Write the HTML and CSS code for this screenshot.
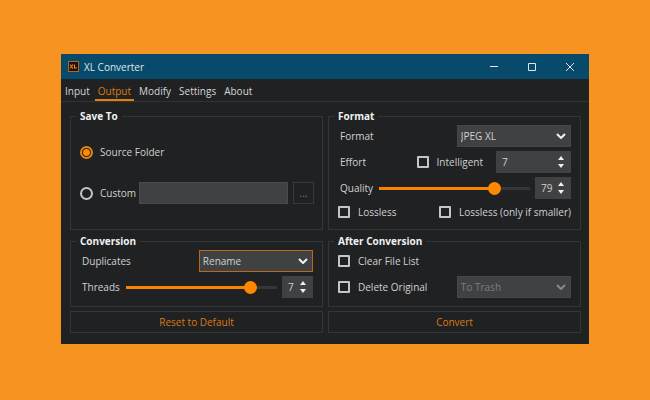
FILE: index.html
```html
<!DOCTYPE html>
<html lang="en">
<head>
<meta charset="utf-8">
<title>XL Converter</title>
<link rel="stylesheet" href="styles.css">
</head>
<body>
<main class="window">
  <header class="titlebar">
    <svg class="app-icon" viewBox="0 0 11 11" aria-hidden="true">
      <rect x="0.5" y="0.5" width="10" height="10" fill="#1c1210" stroke="#b5651d"/>
      <path d="M2 3.5l3 4M5 3.5l-3 4M6.500 3.500v3.500h2.500" fill="none" stroke="#f08a24" stroke-width="1.100"/>
    </svg>
    <h1 class="title">XL Converter</h1>
    <div class="window-controls">
      <button class="window-button" aria-label="Minimize"><svg viewBox="0 0 10 10"><path d="M1 4.500h8"/></svg></button>
      <button class="window-button" aria-label="Maximize"><svg viewBox="0 0 10 10"><path d="M1.500 1.500h7v7h-7z"/></svg></button>
      <button class="window-button" aria-label="Close"><svg viewBox="0 0 10 10"><path d="M1 1l8 8M9 1l-8 8"/></svg></button>
    </div>
  </header>
  <nav class="tabs">
    <a class="tab" href="#input">Input</a>
    <a class="tab tab-active" href="#output" aria-current="page">Output</a>
    <a class="tab" href="#modify">Modify</a>
    <a class="tab" href="#settings">Settings</a>
    <a class="tab" href="#about">About</a>
  </nav>
  <form class="panel">
    <fieldset class="group save-group">
      <legend>Save To</legend>
      <div class="row">
        <input class="radio" type="radio" name="target" id="source" checked>
        <label for="source">Source Folder</label>
      </div>
      <div class="row">
        <input class="radio" type="radio" name="target" id="custom">
        <label for="custom">Custom</label>
        <input class="path" type="text" aria-label="Custom folder" disabled>
        <button class="browse" type="button" aria-label="Browse" disabled>...</button>
      </div>
    </fieldset>

    <fieldset class="group">
      <legend>Format</legend>
      <div class="row">
        <label class="field-label" for="format">Format</label>
        <div class="select push">
          <select id="format"><option>JPEG XL</option></select>
          <svg class="chevron" viewBox="0 0 10 6" aria-hidden="true"><path d="M1 1l4 4 4-4"/></svg>
        </div>
      </div>
      <div class="row">
        <label class="field-label" for="effort">Effort</label>
        <input class="check push" type="checkbox" id="intelligent">
        <label for="intelligent">Intelligent</label>
        <div class="spin spin-wide">
          <input type="number" id="effort" value="7">
          <svg class="arrows" viewBox="0 0 6 12" aria-hidden="true"><path d="M0 4l3-4 3 4zM0 8l3 4 3-4z"/></svg>
        </div>
      </div>
      <div class="row">
        <label class="field-label" for="quality">Quality</label>
        <input class="slider" style="--fill: 78%" type="range" id="quality" min="0" max="100" value="79">
        <div class="spin">
          <input type="number" aria-label="Quality value" value="79">
          <svg class="arrows" viewBox="0 0 6 12" aria-hidden="true"><path d="M0 4l3-4 3 4zM0 8l3 4 3-4z"/></svg>
        </div>
      </div>
      <div class="row row-checks">
        <input class="check" type="checkbox" id="lossless">
        <label for="lossless">Lossless</label>
        <input class="check push" type="checkbox" id="smaller">
        <label for="smaller">Lossless (only if smaller)</label>
      </div>
    </fieldset>

    <fieldset class="group">
      <legend>Conversion</legend>
      <div class="row">
        <label class="field-label" for="duplicates">Duplicates</label>
        <div class="select select-focus push">
          <select id="duplicates"><option>Rename</option></select>
          <svg class="chevron" viewBox="0 0 10 6" aria-hidden="true"><path d="M1 1l4 4 4-4"/></svg>
        </div>
      </div>
      <div class="row">
        <label class="field-label" for="threads">Threads</label>
        <input class="slider" style="--fill: 83%" type="range" id="threads" min="1" max="8" value="7">
        <div class="spin spin-narrow">
          <input type="number" aria-label="Threads value" value="7">
          <svg class="arrows" viewBox="0 0 6 12" aria-hidden="true"><path d="M0 4l3-4 3 4zM0 8l3 4 3-4z"/></svg>
        </div>
      </div>
    </fieldset>

    <fieldset class="group">
      <legend>After Conversion</legend>
      <div class="row">
        <input class="check" type="checkbox" id="clear">
        <label for="clear">Clear File List</label>
      </div>
      <div class="row">
        <input class="check" type="checkbox" id="delete">
        <label for="delete">Delete Original</label>
        <div class="select select-disabled push">
          <select aria-label="Delete method" disabled><option>To Trash</option></select>
          <svg class="chevron" viewBox="0 0 10 6" aria-hidden="true"><path d="M1 1l4 4 4-4"/></svg>
        </div>
      </div>
    </fieldset>

    <button class="action" type="reset">Reset to Default</button>
    <button class="action" type="button">Convert</button>
  </form>
</main>
</body>
</html>
```
FILE: styles.css
```css
* {
  box-sizing: border-box;
}

body {
  margin: 0;
  padding: 54px 61px;
  min-height: 100vh;
  background: #f79321;
  color: #d0d1d2;
  font: 10px/14px "Open Sans", "Noto Sans", sans-serif;
}

button,
input,
select {
  margin: 0;
  padding: 0;
  border: 0;
  background: none;
  color: inherit;
  font: inherit;
}

.window {
  background: #202123;
}

.titlebar {
  display: flex;
  align-items: center;
  height: 25px;
  padding-left: 7px;
  background: #074a6b;
}

.app-icon {
  width: 11px;
  height: 11px;
}

.title {
  margin: 0 auto 0 5px;
  font-size: 10px;
  font-weight: 400;
  color: #dde6eb;
}

.window-controls {
  display: flex;
}

.window-button {
  display: grid;
  place-items: center;
  width: 38px;
  height: 25px;
}

.window-button svg {
  width: 10px;
  height: 10px;
  fill: none;
  stroke: #dbe5ea;
}

.tabs {
  display: flex;
  gap: 2px;
  padding: 0 1px;
  border-bottom: 1px solid #303235;
}

.tab {
  height: 22px;
  padding: 5px 3px 0;
  border-bottom: 2px solid transparent;
  color: #d4d5d6;
  text-decoration: none;
}

.tab-active {
  border-color: #e57f0a;
  color: #dc7a0e;
}

.panel {
  display: grid;
  grid-template-columns: 1fr 1fr;
  gap: 4px 5px;
  padding: 7px 8px 11px 9px;
}

.group {
  display: flex;
  flex-direction: column;
  gap: 4px;
  min-width: 0;
  margin: 0;
  padding: 2px 9px 8px;
  border: 1px solid #333639;
}

.group legend {
  margin-left: -4px;
  padding: 0 4px;
  color: #f0f1f2;
  font-weight: 700;
}

.save-group {
  gap: 19px;
  padding: 18px 8px 8px 9px;
}

.row {
  display: flex;
  align-items: center;
  height: 22px;
}

.row-checks {
  height: 18px;
}

.field-label {
  padding-left: 2px;
}

.push {
  margin-left: auto;
}

.radio,
.check {
  appearance: none;
  flex: none;
  border: 2px solid #c3c6c9;
}

.radio {
  width: 13px;
  height: 13px;
  margin-right: 7px;
  border-radius: 50%;
}

.radio:checked {
  border-color: #e8830f;
  background: radial-gradient(circle, #ff8a00 3px, transparent 4px);
}

.check {
  width: 12px;
  height: 12px;
  margin-right: 8px;
  border-radius: 1px;
}

.path {
  flex: 1;
  min-width: 0;
  height: 22px;
  margin: 0 5px 0 3px;
  background: #404142;
  border: 1px solid #4a4b4c;
}

.browse {
  width: 21px;
  height: 22px;
  border: 1px solid #37393b;
  color: #77797b;
}

.select {
  position: relative;
  width: 49%;
  height: 22px;
  background: #404143;
  border: 1px solid #464749;
}

.select select {
  appearance: none;
  width: 100%;
  height: 100%;
  padding-left: 3px;
}

.select-focus {
  border-color: #ba6a16;
}

.select-disabled {
  color: #7c7e80;
}

.select select:disabled {
  opacity: 1;
}

.chevron {
  position: absolute;
  right: 4px;
  top: 7px;
  width: 10px;
  height: 6px;
  fill: none;
  stroke: #f2f3f4;
  stroke-width: 2;
  pointer-events: none;
}

.select-disabled .chevron {
  stroke: #85878a;
}

.spin {
  position: relative;
  flex: none;
  width: 36px;
  height: 22px;
  margin-left: 5px;
  background: #404143;
}

.spin input {
  appearance: textfield;
  width: 100%;
  height: 100%;
  padding-left: 6px;
}

.spin input::-webkit-inner-spin-button {
  display: none;
}

.spin-narrow {
  width: 31px;
}

.spin-wide {
  width: 75px;
  margin-left: 13px;
}

.arrows {
  position: absolute;
  right: 7px;
  top: 5px;
  width: 6px;
  height: 12px;
  fill: #eeeff0;
  pointer-events: none;
}

.slider {
  appearance: none;
  flex: 1;
  min-width: 0;
  height: 14px;
  margin-left: 6px;
}

.slider::-webkit-slider-runnable-track {
  height: 3px;
  background: linear-gradient(to right, #f88500 var(--fill), #343638 var(--fill));
}

.slider::-webkit-slider-thumb {
  appearance: none;
  width: 13px;
  height: 13px;
  margin-top: -5px;
  border-radius: 50%;
  background: #ff8800;
}

.action {
  height: 22px;
  border: 1px solid #333639;
  color: #dc7a0e;
}
```
